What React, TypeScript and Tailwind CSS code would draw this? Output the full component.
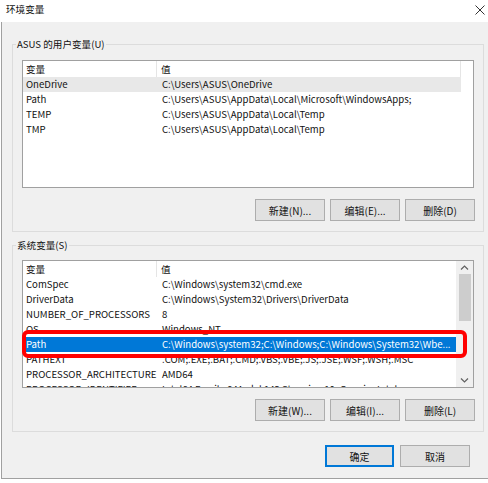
import React from "react";

type Row = { name: string; value: string };

const userVars: Row[] = [
  { name: "OneDrive", value: "C:\\Users\\ASUS\\OneDrive" },
  { name: "Path", value: "C:\\Users\\ASUS\\AppData\\Local\\Microsoft\\WindowsApps;" },
  { name: "TEMP", value: "C:\\Users\\ASUS\\AppData\\Local\\Temp" },
  { name: "TMP", value: "C:\\Users\\ASUS\\AppData\\Local\\Temp" },
];

const sysVars: Row[] = [
  { name: "ComSpec", value: "C:\\Windows\\system32\\cmd.exe" },
  { name: "DriverData", value: "C:\\Windows\\System32\\Drivers\\DriverData" },
  { name: "NUMBER_OF_PROCESSORS", value: "8" },
  { name: "OS", value: "Windows_NT" },
  { name: "Path", value: "C:\\Windows\\system32;C:\\Windows;C:\\Windows\\System32\\Wbe..." },
  { name: "PATHEXT", value: ".COM;.EXE;.BAT;.CMD;.VBS;.VBE;.JS;.JSE;.WSF;.WSH;.MSC" },
  { name: "PROCESSOR_ARCHITECTURE", value: "AMD64" },
  { name: "PROCESSOR_IDENTIFIER", value: "Intel64 Family 6 Model 142 Stepping 10, GenuineIntel" },
];

const WinButton = ({ label, primary }: { label: string; primary?: boolean }) => (
  <button
    type="button"
    className={
      primary
        ? "h-[22px] w-[69px] bg-[#e1e1e1] border-2 border-[#0078d7] text-[10px] text-[#111]"
        : "h-[22px] w-[70px] bg-[#e1e1e1] border border-[#adadad] text-[10px] text-[#111]"
    }
  >
    {label}
  </button>
);

// one listview (details mode)
const ListView = ({
  rows,
  hot,
  selected,
  scroll,
}: {
  rows: Row[];
  hot?: number;
  selected?: number;
  scroll?: boolean;
}) => {
  return (
    <div className="flex h-[128px] w-[452px] border border-[#a0a0a0] bg-white overflow-hidden">
      <div className="flex-1 min-w-0 overflow-hidden">
        <div className="flex h-[16px] w-[438px] items-center leading-[16px]">
          <div className="w-[134px] h-full pl-[3px] border-r border-[#e5e5e5]">变量</div>
          <div className="w-[304px] h-full pl-[4px] border-r border-[#e5e5e5]">值</div>
        </div>
        {rows.map((r, i) => {
          let rowCls = "flex h-[15px] w-[438px] items-center leading-[15px] whitespace-nowrap";
          if (i === selected) rowCls += " bg-[#0078d7] text-white";
          else if (i === hot) rowCls += " bg-[#e8e8e8]";
          return (
            <div key={r.name + i} className={rowCls}>
              <div className="w-[134px] pl-[3px] overflow-hidden">{r.name}</div>
              <div className="w-[304px] pl-[5px] overflow-hidden">{r.value}</div>
            </div>
          );
        })}
      </div>
      {scroll && (
        <div className="flex w-[17px] shrink-0 flex-col bg-[#f0f0f0]">
          <div className="flex h-[13px] items-center justify-center">
            <svg width="9" height="5" viewBox="0 0 9 5">
              <path d="M1 4.5 L4.5 1 L8 4.5" stroke="#606060" strokeWidth="1.2" fill="none" />
            </svg>
          </div>
          <div className="ml-[3px] h-[47px] w-[12px] bg-[#cdcdcd]" />
          <div className="flex-1" />
          <div className="flex h-[13px] items-center justify-center">
            <svg width="9" height="5" viewBox="0 0 9 5">
              <path d="M1 0.5 L4.5 4 L8 0.5" stroke="#606060" strokeWidth="1.2" fill="none" />
            </svg>
          </div>
        </div>
      )}
    </div>
  );
};

const GroupBox = ({ title, children, pt }: { title: string; children: React.ReactNode; pt: string }) => (
  <div className={`relative ml-[10px] w-[472px] border border-[#dcdcdc] pl-[9px] pb-[10px] ${pt}`}>
    <span className="absolute left-[3px] top-[-9px] bg-[#f0f0f0] px-[1px] leading-[16px] text-[#111]">
      {title}
    </span>
    {children}
  </div>
);

const EnvDialog = () => {
  return (
    <div className="h-[483px] w-[488px] overflow-hidden bg-white font-['Noto_Sans_CJK_SC','Noto_Sans',sans-serif] text-[9.6px] text-[#111]">
      {/* title bar */}
      <div className="flex h-[22px] items-start justify-between">
        <span className="pl-[6px] pt-[1px] leading-[16px]">环境变量</span>
        <svg className="mr-[3px] mt-[5px]" width="10" height="10" viewBox="0 0 10 10">
          <path d="M0.5 0.5 L9.5 9.5 M9.5 0.5 L0.5 9.5" stroke="#333" strokeWidth="1" />
        </svg>
      </div>

      {/* dialog body */}
      <div className="ml-[1px] h-[457px] w-[487px] border-l border-b border-[#a0a0a0] bg-[#f0f0f0] pt-[22px]">
        <GroupBox title="ASUS 的用户变量(U)" pt="pt-[15px]">
          <ListView rows={userVars} hot={0} />
          <div className="mt-[11px] flex w-[453px] justify-end gap-[5px]">
            <WinButton label="新建(N)..." />
            <WinButton label="编辑(E)..." />
            <WinButton label="删除(D)" />
          </div>
        </GroupBox>

        <div className="mt-[13px]">
          <GroupBox title="系统变量(S)" pt="pt-[14px]">
            <div className="relative">
              <ListView rows={sysVars} selected={4} scroll />
              {/* red annotation around the Path row */}
              <div className="absolute left-0 top-[70px] h-[28px] w-[445px] rounded-[6px] border-4 border-[#ff0000]" />
            </div>
            <div className="mt-[11px] flex w-[453px] justify-end gap-[5px]">
              <WinButton label="新建(W)..." />
              <WinButton label="编辑(I)..." />
              <WinButton label="删除(L)" />
            </div>
          </GroupBox>
        </div>

        <div className="mt-[13px] flex justify-end gap-[6px] pr-[18px]">
          <WinButton label="确定" primary />
          <WinButton label="取消" />
        </div>
      </div>
    </div>
  );
};

export default function App() {
  return <EnvDialog />;
}
